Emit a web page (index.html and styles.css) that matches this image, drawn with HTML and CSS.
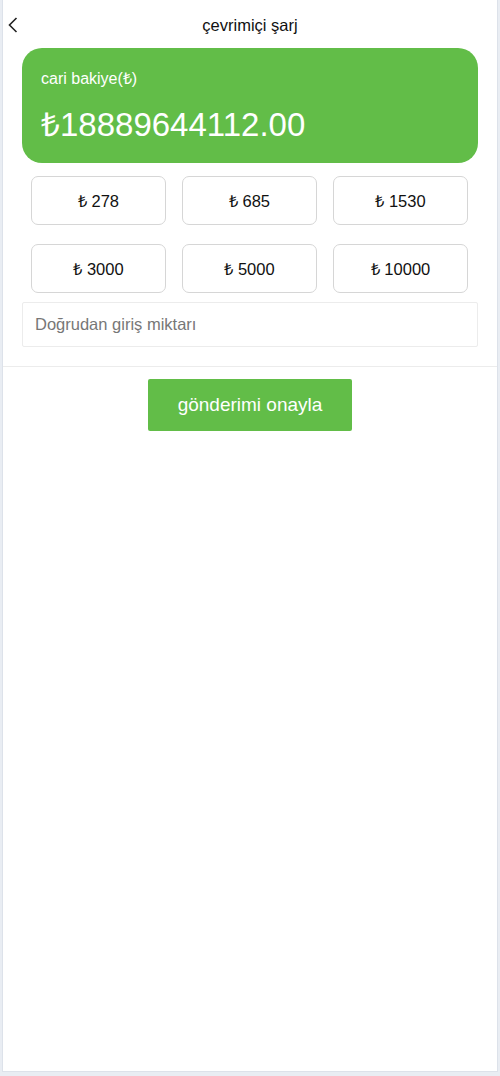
FILE: index.html
```html
<!DOCTYPE html>
<html lang="tr">
  <head>
    <meta charset="UTF-8" />
    <meta name="viewport" content="width=device-width, initial-scale=1.0" />
    <title>çevrimiçi şarj</title>
    <link rel="stylesheet" href="styles.css">
  </head>
  <body>
    <div class="page">
      <div class="header">
        <span class="back">
          <svg width="10" height="16" viewBox="0 0 10 16">
            <path d="M8.5 1 L1.5 8 L8.5 15" fill="none" stroke="#222" stroke-width="1.6" />
          </svg>
        </span>
        <div class="title">çevrimiçi şarj</div>
      </div>

      <div class="top">
        <div class="balance">
          <div class="label">cari bakiye(₺)</div>
          <div class="amount">₺18889644112.00</div>
        </div>

        <div class="amounts">
          <div class="amount-btn">₺ 278</div>
          <div class="amount-btn">₺ 685</div>
          <div class="amount-btn">₺ 1530</div>
          <div class="amount-btn">₺ 3000</div>
          <div class="amount-btn">₺ 5000</div>
          <div class="amount-btn">₺ 10000</div>
        </div>

        <input class="direct" type="text" placeholder="Doğrudan giriş miktarı" />
      </div>

      <div class="actions">
        <button class="submit">gönderimi onayla</button>
      </div>
    </div>
  </body>
</html>
```

FILE: styles.css
```css
body {
  margin: 0;
  padding: 0 2px 4px;
  background: #e9edf3;
  font-family: "Liberation Sans", Arial, sans-serif;
  color: #111;
}

.page {
  height: 1072px;
  box-sizing: border-box;
  background: #fff;
  border: 1px solid #dde2ea;
  border-top: none;
}

.header {
  position: relative;
  height: 48px;
  display: flex;
  align-items: center;
  justify-content: center;
}

.back {
  position: absolute;
  left: 5px;
  top: 17px;
  display: flex;
}

.title {
  font-size: 16.5px;
  margin-top: 2px;
}

.top {
  padding: 0 19px 19px;
}

.balance {
  height: 115px;
  box-sizing: border-box;
  padding: 19px 19px 0;
  background: #62bd48;
  border-radius: 20px;
  color: #fff;
}

.label {
  font-size: 16px;
}

.amount {
  font-size: 33px;
  margin-top: 12px;
}

.amounts {
  display: grid;
  grid-template-columns: repeat(3, 1fr);
  column-gap: 16px;
  row-gap: 19px;
  padding: 0 10px 0 9px;
  margin-top: 13px;
}

.amount-btn {
  height: 49px;
  box-sizing: border-box;
  border: 1px solid #d6d6d6;
  border-radius: 7px;
  display: flex;
  align-items: center;
  justify-content: center;
  font-size: 16.5px;
  padding-bottom: 1px;
}

.direct {
  display: block;
  width: 100%;
  height: 45px;
  box-sizing: border-box;
  margin-top: 9px;
  padding: 0 12px;
  border: 1px solid #ececec;
  border-radius: 2px;
  font-family: inherit;
  font-size: 16.5px;
  outline: none;
}

.direct::placeholder {
  color: #777;
}

.actions {
  border-top: 1px solid #ececec;
  display: flex;
  justify-content: center;
  padding-top: 12px;
}

.submit {
  width: 204px;
  height: 52px;
  border: none;
  border-radius: 2px;
  background: #62bd48;
  color: #fff;
  font-family: inherit;
  font-size: 19px;
}
```
